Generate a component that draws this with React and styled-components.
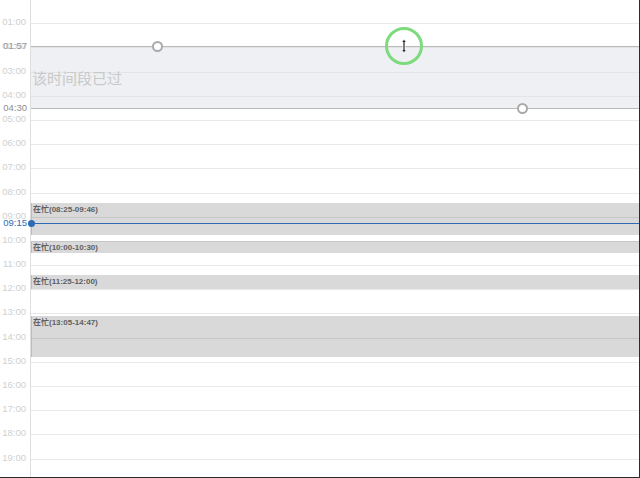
import React from 'react';
import styled, { createGlobalStyle } from 'styled-components';

const HOUR = 24.2;
const OFFSET = -1;
const GUTTER = 31;

const GlobalStyle = createGlobalStyle`
  html, body { margin: 0; padding: 0; background: #fff; }
  body { font-family: "Liberation Sans", "Noto Sans CJK SC", sans-serif; }
`;

const Frame = styled.div`
  position: relative;
  width: 640px;
  height: 478px;
  overflow: hidden;
  box-sizing: border-box;
  border-right: 1px solid #2b2b2b;
  border-bottom: 1px solid #2b2b2b;
  background: #fff;
`;

const Grid = styled.div`
  margin-top: ${OFFSET}px;
  display: flex;
  flex-direction: column;
`;

const HourRow = styled.div`
  display: flex;
  height: ${HOUR}px;
`;

const Gutter = styled.div`
  width: ${GUTTER}px;
  flex: none;
  border-right: 1px solid #dedede;
  box-sizing: border-box;
  padding-right: 4px;
`;

const HourLabel = styled.span`
  display: block;
  text-align: right;
  font-size: 9.5px;
  line-height: 10px;
  color: #cfcfcf;
  transform: translateY(-60%);
`;

const Cell = styled.div`
  flex: 1;
  border-top: 1px solid #e9e9e9;
`;

const Overlay = styled.div`
  position: absolute;
  left: 0;
  width: ${GUTTER - 4}px;
`;

const MarkLabel = styled.span`
  display: block;
  text-align: right;
  font-size: 9.5px;
  line-height: 10px;
  color: ${p => p.$color};
  transform: translateY(-60%);
`;

const PastBlock = styled.div`
  position: absolute;
  left: ${GUTTER}px;
  right: 0;
  background: rgba(218, 222, 228, 0.45);
  border-top: 1px solid #b9b9b9;
  border-bottom: 1px solid #b9b9b9;
  box-sizing: border-box;
  display: flex;
  align-items: center;
`;

const PastText = styled.span`
  font-family: "Noto Sans CJK SC", sans-serif;
  font-size: 15px;
  color: #c9c9c9;
  margin-left: 1px;
`;

const Handle = styled.span`
  position: absolute;
  left: ${p => p.$x - GUTTER - 5}px;
  ${p => (p.$bottom ? 'bottom: -6px;' : 'top: -6px;')}
  width: 7px;
  height: 7px;
  border: 2px solid #a9a9a9;
  border-radius: 50%;
  background: #fff;
`;

const Busy = styled.div`
  position: absolute;
  left: ${GUTTER}px;
  right: 0;
  background: rgba(0, 0, 0, 0.15);
  border-left: 1px solid #bdbdbd;
  box-sizing: border-box;
`;

const BusyText = styled.span`
  display: block;
  font-family: "Liberation Sans", "Noto Sans CJK SC", sans-serif;
  font-size: 8px;
  font-weight: bold;
  line-height: 10px;
  color: #5f5f5f;
  padding: 2px 0 0 1px;
`;

const NowLine = styled.div`
  position: absolute;
  left: ${GUTTER}px;
  right: 0;
  height: 1px;
  background: #2e6bb2;
`;

const NowDot = styled.span`
  position: absolute;
  left: -3px;
  top: -3px;
  width: 7px;
  height: 7px;
  border-radius: 50%;
  background: #2e6bb2;
`;

const CursorRing = styled.div`
  position: absolute;
  left: ${404 - 19}px;
  top: ${46 - 19}px;
  width: 38px;
  height: 38px;
`;

const y = t => {
  const [h, m] = t.split(':').map(Number);
  return OFFSET + (h + m / 60) * HOUR;
};

const pad = n => String(n).padStart(2, '0');
const hours = Array.from({ length: 21 }, (_, i) => i);

const busy = [
  ['08:25', '09:46'],
  ['10:00', '10:30'],
  ['11:25', '12:00'],
  ['13:05', '14:47'],
];

export default function App() {
  const pastTop = y('01:57');
  const pastBottom = y('04:30');
  const now = Math.round(y('09:15'));
  return (
    <Frame>
      <GlobalStyle />
      <Grid>
        {hours.map(h => (
          <HourRow key={h}>
            <Gutter>{h > 0 && <HourLabel>{pad(h)}:00</HourLabel>}</Gutter>
            <Cell />
          </HourRow>
        ))}
      </Grid>

      <PastBlock style={{ top: pastTop, height: pastBottom - pastTop + 1 }}>
        <PastText>该时间段已过</PastText>
        <Handle $x={157} />
        <Handle $x={522} $bottom />
      </PastBlock>
      <Overlay style={{ top: pastTop + 1 }}>
        <MarkLabel $color="#9a9a9a">01:57</MarkLabel>
      </Overlay>
      <Overlay style={{ top: pastBottom + 1 }}>
        <MarkLabel $color="#8e8e8e">04:30</MarkLabel>
      </Overlay>

      {busy.map(([a, b]) => (
        <Busy key={a} style={{ top: y(a), height: y(b) - y(a) }}>
          <BusyText>在忙({a}-{b})</BusyText>
        </Busy>
      ))}

      <NowLine style={{ top: now }}>
        <NowDot />
      </NowLine>
      <Overlay style={{ top: now + 1 }}>
        <MarkLabel $color="#2e6bb2">09:15</MarkLabel>
      </Overlay>

      <CursorRing>
        <svg width="38" height="38" viewBox="0 0 38 38">
          <circle cx="19" cy="19" r="17.5" fill="none" stroke="#7ddb7d" strokeWidth="3" />
          <path
            d="M19 12.5 L16.5 15 L18 15 L18 23 L16.5 23 L19 25.5 L21.5 23 L20 23 L20 15 L21.5 15 Z"
            fill="#222"
            stroke="#fff"
            strokeWidth="0.8"
          />
        </svg>
      </CursorRing>
    </Frame>
  );
}
